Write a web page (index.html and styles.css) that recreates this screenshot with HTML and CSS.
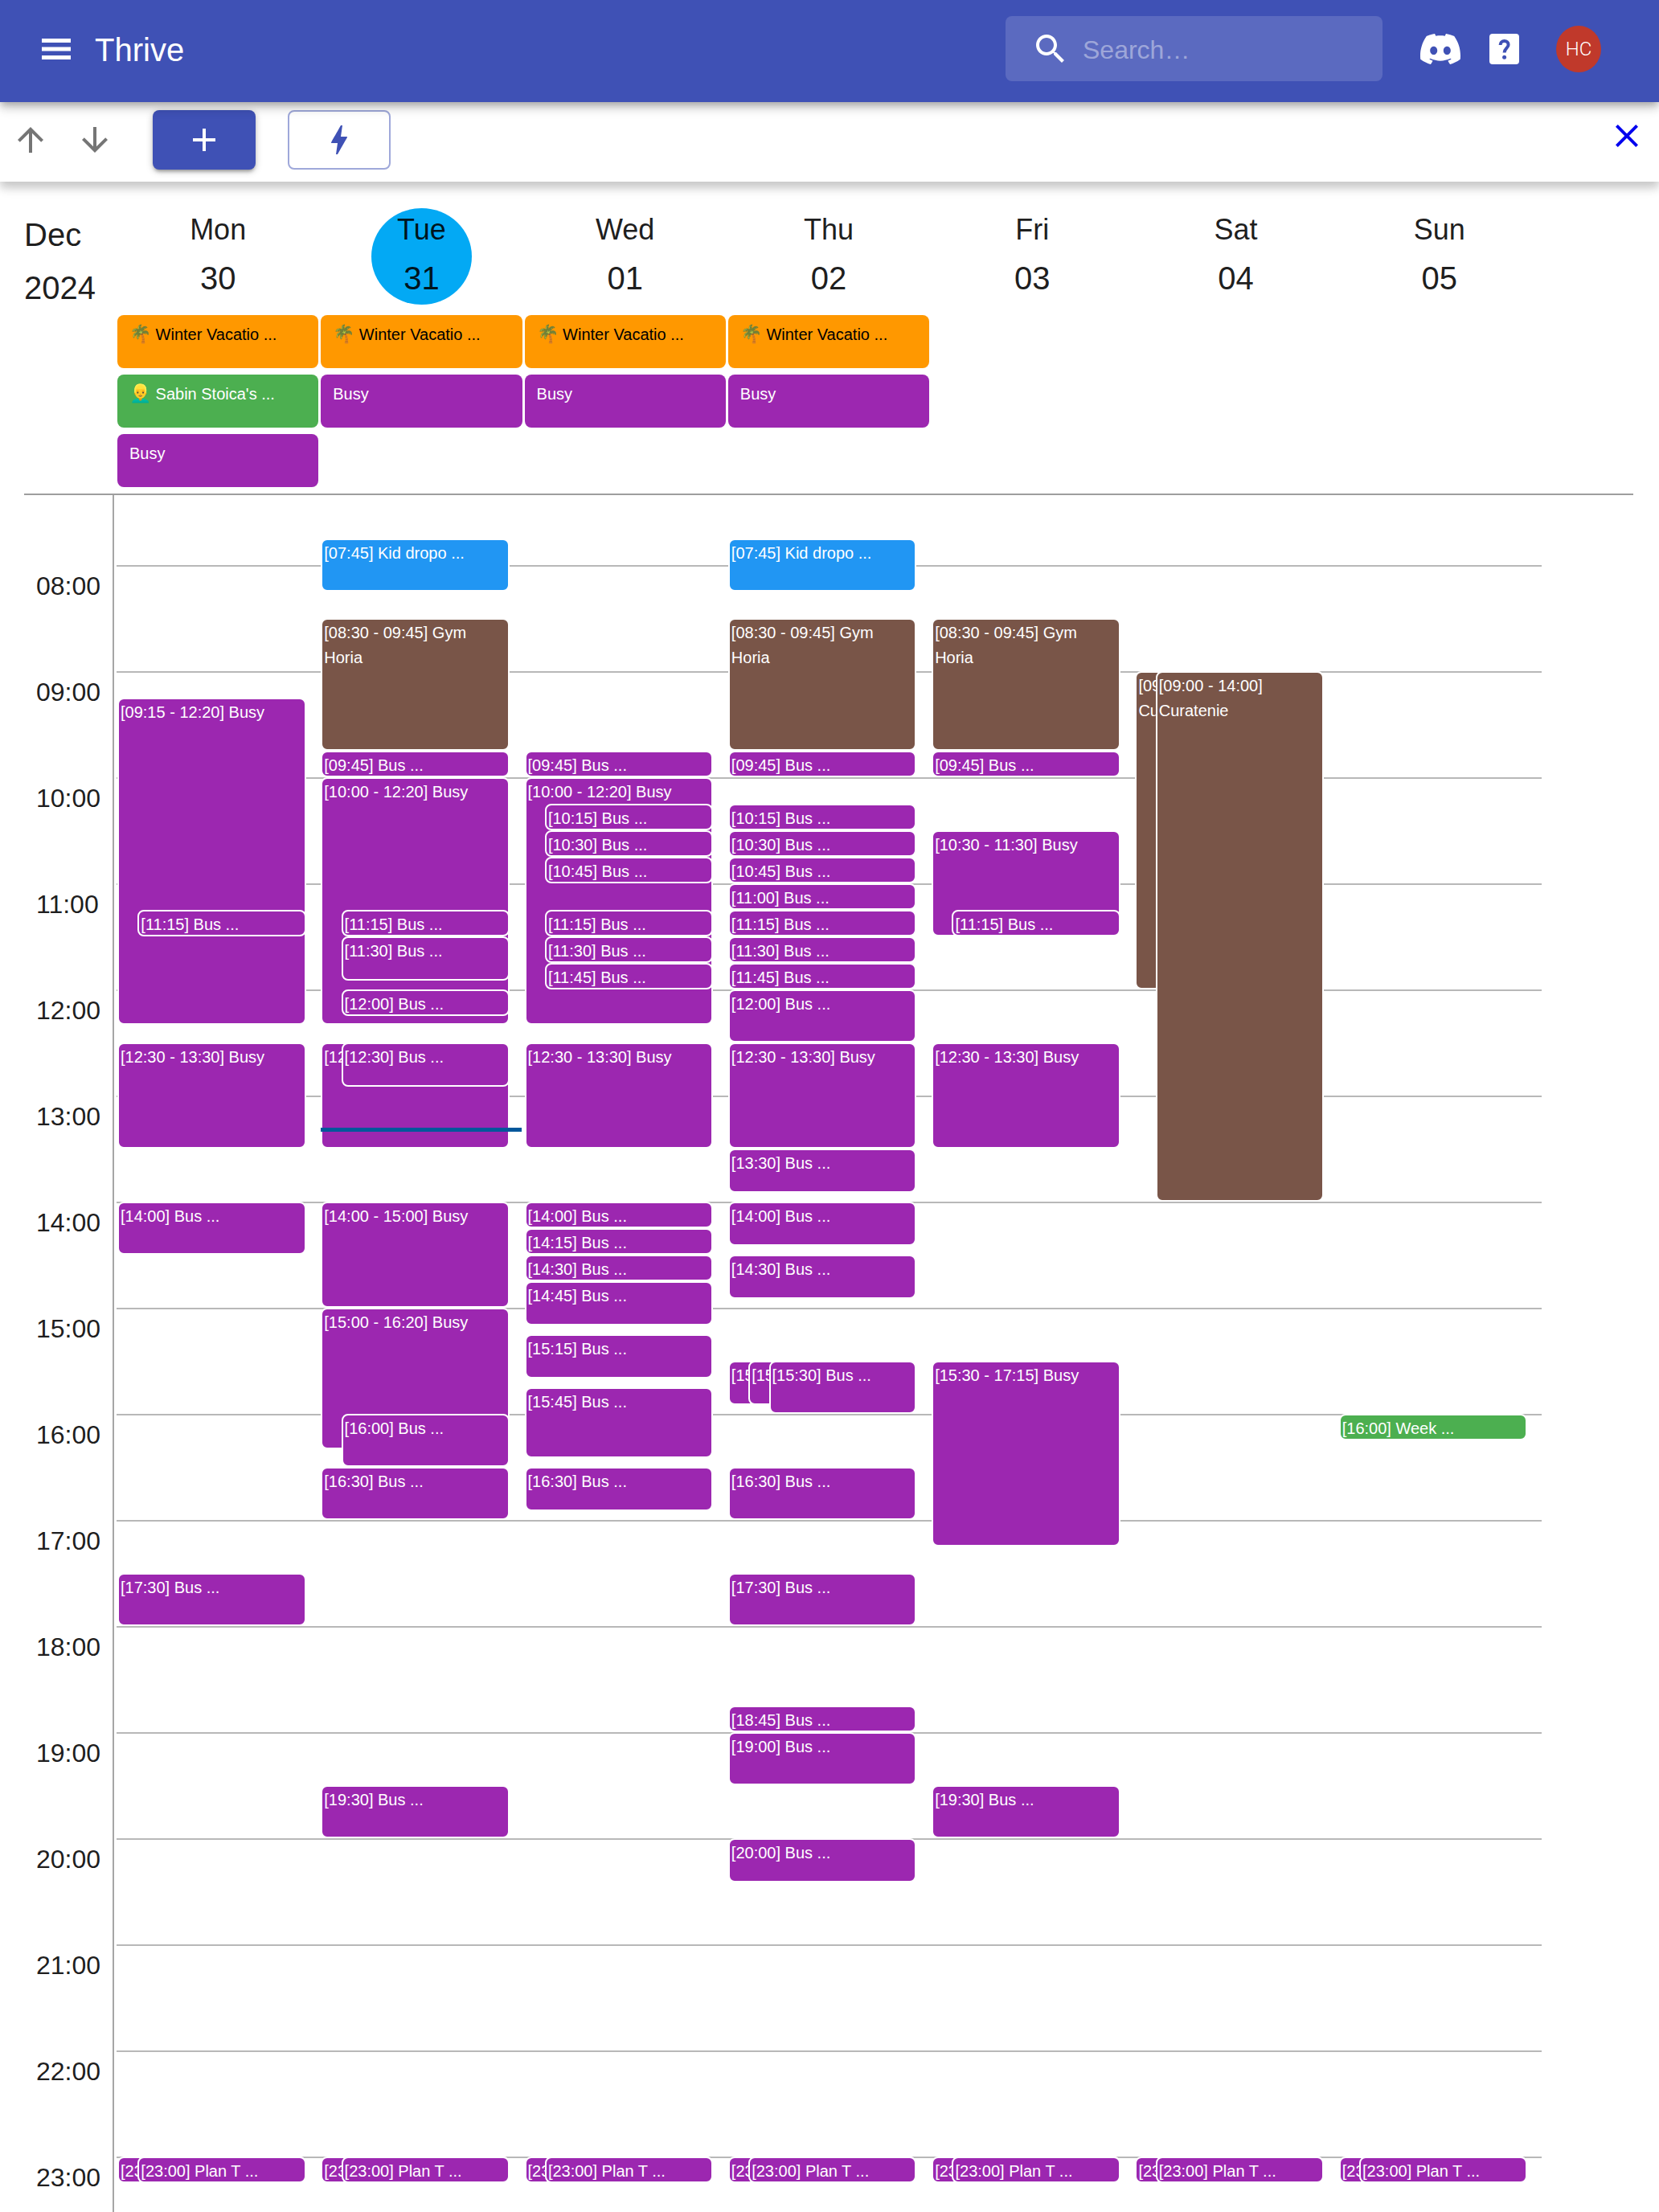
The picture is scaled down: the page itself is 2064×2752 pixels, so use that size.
FILE: index.html
```html
<!DOCTYPE html>
<html lang="en">
<head>
<meta charset="utf-8">
<meta name="viewport" content="width=device-width, initial-scale=1">
<title>Thrive</title>
<link rel="stylesheet" href="styles.css">
</head>
<body>
<div class="app">
  <header class="app-bar">
    <button class="icon-button" type="button" aria-label="Menu">
      <svg class="menu-icon" viewBox="0 0 36 26"><path d="M0 0h36v5H0zM0 10.5h36v5H0zM0 21h36v5H0z"/></svg>
    </button>
    <h1 class="brand">Thrive</h1>
    <label class="search">
      <svg class="icon" viewBox="0 0 24 24"><path d="M15.5 14h-.79l-.28-.27C15.41 12.59 16 11.11 16 9.5 16 5.91 13.09 3 9.5 3S3 5.91 3 9.5 5.91 16 9.5 16c1.61 0 3.09-.59 4.23-1.57l.27.28v.79l5 4.99L20.49 19l-4.99-5zm-6 0C7.01 14 5 11.99 5 9.5S7.01 5 9.5 5 14 7.01 14 9.5 11.99 14 9.5 14z"/></svg>
      <input class="search-input" type="search" placeholder="Search…" aria-label="Search">
    </label>
    <a class="discord" href="#discord" aria-label="Discord">
      <svg class="discord-icon" viewBox="0 0 24 24"><path d="M20.317 4.3698a19.7913 19.7913 0 00-4.8851-1.5152.0741.0741 0 00-.0785.0371c-.211.3753-.4447.8648-.6083 1.2495-1.8447-.2762-3.68-.2762-5.4868 0-.1636-.3933-.4058-.8742-.6177-1.2495a.077.077 0 00-.0785-.037 19.7363 19.7363 0 00-4.8852 1.515.0699.0699 0 00-.0321.0277C.5334 9.0458-.319 13.5799.0992 18.0578a.0824.0824 0 00.0312.0561c2.0528 1.5076 4.0413 2.4228 5.9929 3.0294a.0777.0777 0 00.0842-.0276c.4616-.6304.8731-1.2952 1.226-1.9942a.076.076 0 00-.0416-.1057c-.6528-.2476-1.2743-.5495-1.8722-.8923a.077.077 0 01-.0076-.1277c.1258-.0943.2517-.1923.3718-.2914a.0743.0743 0 01.0776-.0105c3.9278 1.7933 8.18 1.7933 12.0614 0a.0739.0739 0 01.0785.0095c.1202.099.246.1981.3728.2924a.077.077 0 01-.0066.1276 12.2986 12.2986 0 01-1.873.8914.0766.0766 0 00-.0407.1067c.3604.698.7719 1.3628 1.225 1.9932a.076.076 0 00.0842.0286c1.961-.6067 3.9495-1.5219 6.0023-3.0294a.077.077 0 00.0313-.0552c.5004-5.177-.8382-9.6739-3.5485-13.6604a.061.061 0 00-.0312-.0286zM8.02 15.3312c-1.1825 0-2.1569-1.0857-2.1569-2.419 0-1.3332.9555-2.4189 2.157-2.4189 1.2108 0 2.1757 1.0952 2.1568 2.419 0 1.3332-.9555 2.4189-2.1569 2.4189zm7.9748 0c-1.1825 0-2.1569-1.0857-2.1569-2.419 0-1.3332.9554-2.4189 2.1569-2.4189 1.2108 0 2.1757 1.0952 2.1568 2.419 0 1.3332-.946 2.4189-2.1568 2.4189Z"/></svg>
    </a>
    <a class="help" href="#help" aria-label="Help">
      <svg class="help-icon" viewBox="0 0 37 38"><rect width="37" height="38" rx="4"/><path class="help-hook" d="M13.6 14c0-3 2.2-5 5-5s5 2 5 4.700c0 4-5 4.500-5 9.800"/><circle class="help-dot" cx="18.600" cy="29.200" r="2.500"/></svg>
    </a>
    <button class="avatar" type="button">HC</button>
  </header>

  <nav class="toolbar">
    <button class="icon-button muted" type="button" aria-label="Previous week">
      <svg class="icon" viewBox="0 0 24 24"><path d="M4 12l1.410 1.410L11 7.830V20h2V7.830l5.580 5.590L20 12l-8-8-8 8z"/></svg>
    </button>
    <button class="icon-button muted" type="button" aria-label="Next week">
      <svg class="icon" viewBox="0 0 24 24"><path d="M20 12l-1.410-1.410L13 16.170V4h-2v12.170l-5.580-5.590L4 12l8 8 8-8z"/></svg>
    </button>
    <div class="actions">
      <button class="action primary" type="button" aria-label="Add event">
        <svg class="icon" viewBox="0 0 24 24"><path d="M19 13h-6v6h-2v-6H5v-2h6V5h2v6h6v2z"/></svg>
      </button>
      <button class="action outlined" type="button" aria-label="Shortcuts">
        <svg class="icon" viewBox="0 0 24 24"><path d="M11 21h-1l1-7H7.500c-.580 0-.570-.320-.380-.660.190-.340.050-.080.070-.120C8.480 10.940 10.420 7.540 13 3h1l-1 7h3.500c.490 0 .560.330.470.510l-.070.150C12.960 17.550 11 21 11 21z"/></svg>
      </button>
    </div>
    <a class="close" href="#close" aria-label="Close">
      <svg class="icon" viewBox="0 0 24 24"><path d="M19 6.410L17.590 5 12 10.590 6.410 5 5 6.410 10.590 12 5 17.590 6.410 19 12 13.410 17.590 19 19 17.590 13.410 12z"/></svg>
    </a>
  </nav>

  <main class="calendar">
    <section class="week-header">
      <div class="month"><span>Dec</span><span>2024</span></div>
      <div class="days">
        <div class="day"><h2 class="date"><span class="weekday">Mon</span><span class="number">30</span></h2>
          <a class="all-day vacation" href="#e"><span class="emoji">🌴</span> Winter Vacatio ...</a>
          <a class="all-day birthday" href="#e"><span class="emoji">👱‍♂️</span> Sabin Stoica's ...</a>
          <a class="all-day busy" href="#e">Busy</a></div>
        <div class="day"><h2 class="date today"><span class="weekday">Tue</span><span class="number">31</span></h2>
          <a class="all-day vacation" href="#e"><span class="emoji">🌴</span> Winter Vacatio ...</a>
          <a class="all-day busy" href="#e">Busy</a></div>
        <div class="day"><h2 class="date"><span class="weekday">Wed</span><span class="number">01</span></h2>
          <a class="all-day vacation" href="#e"><span class="emoji">🌴</span> Winter Vacatio ...</a>
          <a class="all-day busy" href="#e">Busy</a></div>
        <div class="day"><h2 class="date"><span class="weekday">Thu</span><span class="number">02</span></h2>
          <a class="all-day vacation" href="#e"><span class="emoji">🌴</span> Winter Vacatio ...</a>
          <a class="all-day busy" href="#e">Busy</a></div>
        <div class="day"><h2 class="date"><span class="weekday">Fri</span><span class="number">03</span></h2></div>
        <div class="day"><h2 class="date"><span class="weekday">Sat</span><span class="number">04</span></h2></div>
        <div class="day"><h2 class="date"><span class="weekday">Sun</span><span class="number">05</span></h2></div>
      </div>
    </section>

    <section class="scroller">
      <div class="hours">
        <div class="hour"></div>
        <div class="hour">08:00</div>
        <div class="hour">09:00</div>
        <div class="hour">10:00</div>
        <div class="hour">11:00</div>
        <div class="hour">12:00</div>
        <div class="hour">13:00</div>
        <div class="hour">14:00</div>
        <div class="hour">15:00</div>
        <div class="hour">16:00</div>
        <div class="hour">17:00</div>
        <div class="hour">18:00</div>
        <div class="hour">19:00</div>
        <div class="hour">20:00</div>
        <div class="hour">21:00</div>
        <div class="hour">22:00</div>
        <div class="hour">23:00</div>
      </div>
      <!-- --s: start, --n: length, both in five-minute slots counted from 07:00; --l: overlap level -->
      <div class="week">
        <div class="column">
          <a class="event busy" href="#e" style="--s:27;--n:37">[09:15 - 12:20] Busy</a>
          <a class="event busy" href="#e" style="--s:51;--n:3;--l:1">[11:15] Bus ...</a>
          <a class="event busy" href="#e" style="--s:66;--n:12">[12:30 - 13:30] Busy</a>
          <a class="event busy" href="#e" style="--s:84;--n:6">[14:00] Bus ...</a>
          <a class="event busy" href="#e" style="--s:126;--n:6">[17:30] Bus ...</a>
          <a class="event busy" href="#e" style="--s:192;--n:3">[23:00] Plan T ...</a>
          <a class="event busy" href="#e" style="--s:192;--n:3;--l:1">[23:00] Plan T ...</a>
        </div>
        <div class="column">
          <a class="event family" href="#e" style="--s:9;--n:6">[07:45] Kid dropo ...</a>
          <a class="event chore" href="#e" style="--s:18;--n:15">[08:30 - 09:45] Gym Horia</a>
          <a class="event busy" href="#e" style="--s:33;--n:3">[09:45] Bus ...</a>
          <a class="event busy" href="#e" style="--s:36;--n:28">[10:00 - 12:20] Busy</a>
          <a class="event busy" href="#e" style="--s:51;--n:3;--l:1">[11:15] Bus ...</a>
          <a class="event busy" href="#e" style="--s:54;--n:5;--l:1">[11:30] Bus ...</a>
          <a class="event busy" href="#e" style="--s:60;--n:3;--l:1">[12:00] Bus ...</a>
          <a class="event busy" href="#e" style="--s:66;--n:12">[12:30 - 13:30] Busy</a>
          <a class="event busy" href="#e" style="--s:66;--n:5;--l:1">[12:30] Bus ...</a>
          <a class="event busy" href="#e" style="--s:84;--n:12">[14:00 - 15:00] Busy</a>
          <a class="event busy" href="#e" style="--s:96;--n:16">[15:00 - 16:20] Busy</a>
          <a class="event busy" href="#e" style="--s:108;--n:6;--l:1">[16:00] Bus ...</a>
          <a class="event busy" href="#e" style="--s:114;--n:6">[16:30] Bus ...</a>
          <a class="event busy" href="#e" style="--s:150;--n:6">[19:30] Bus ...</a>
          <a class="event busy" href="#e" style="--s:192;--n:3">[23:00] Plan T ...</a>
          <a class="event busy" href="#e" style="--s:192;--n:3;--l:1">[23:00] Plan T ...</a>
          <div class="now" style="--m:378"></div>
        </div>
        <div class="column">
          <a class="event busy" href="#e" style="--s:33;--n:3">[09:45] Bus ...</a>
          <a class="event busy" href="#e" style="--s:36;--n:28">[10:00 - 12:20] Busy</a>
          <a class="event busy" href="#e" style="--s:39;--n:3;--l:1">[10:15] Bus ...</a>
          <a class="event busy" href="#e" style="--s:42;--n:3;--l:1">[10:30] Bus ...</a>
          <a class="event busy" href="#e" style="--s:45;--n:3;--l:1">[10:45] Bus ...</a>
          <a class="event busy" href="#e" style="--s:51;--n:3;--l:1">[11:15] Bus ...</a>
          <a class="event busy" href="#e" style="--s:54;--n:3;--l:1">[11:30] Bus ...</a>
          <a class="event busy" href="#e" style="--s:57;--n:3;--l:1">[11:45] Bus ...</a>
          <a class="event busy" href="#e" style="--s:66;--n:12">[12:30 - 13:30] Busy</a>
          <a class="event busy" href="#e" style="--s:84;--n:3">[14:00] Bus ...</a>
          <a class="event busy" href="#e" style="--s:87;--n:3">[14:15] Bus ...</a>
          <a class="event busy" href="#e" style="--s:90;--n:3">[14:30] Bus ...</a>
          <a class="event busy" href="#e" style="--s:93;--n:5">[14:45] Bus ...</a>
          <a class="event busy" href="#e" style="--s:99;--n:5">[15:15] Bus ...</a>
          <a class="event busy" href="#e" style="--s:105;--n:8">[15:45] Bus ...</a>
          <a class="event busy" href="#e" style="--s:114;--n:5">[16:30] Bus ...</a>
          <a class="event busy" href="#e" style="--s:192;--n:3">[23:00] Plan T ...</a>
          <a class="event busy" href="#e" style="--s:192;--n:3;--l:1">[23:00] Plan T ...</a>
        </div>
        <div class="column">
          <a class="event family" href="#e" style="--s:9;--n:6">[07:45] Kid dropo ...</a>
          <a class="event chore" href="#e" style="--s:18;--n:15">[08:30 - 09:45] Gym Horia</a>
          <a class="event busy" href="#e" style="--s:33;--n:3">[09:45] Bus ...</a>
          <a class="event busy" href="#e" style="--s:39;--n:3">[10:15] Bus ...</a>
          <a class="event busy" href="#e" style="--s:42;--n:3">[10:30] Bus ...</a>
          <a class="event busy" href="#e" style="--s:45;--n:3">[10:45] Bus ...</a>
          <a class="event busy" href="#e" style="--s:48;--n:3">[11:00] Bus ...</a>
          <a class="event busy" href="#e" style="--s:51;--n:3">[11:15] Bus ...</a>
          <a class="event busy" href="#e" style="--s:54;--n:3">[11:30] Bus ...</a>
          <a class="event busy" href="#e" style="--s:57;--n:3">[11:45] Bus ...</a>
          <a class="event busy" href="#e" style="--s:60;--n:6">[12:00] Bus ...</a>
          <a class="event busy" href="#e" style="--s:66;--n:12">[12:30 - 13:30] Busy</a>
          <a class="event busy" href="#e" style="--s:78;--n:5">[13:30] Bus ...</a>
          <a class="event busy" href="#e" style="--s:84;--n:5">[14:00] Bus ...</a>
          <a class="event busy" href="#e" style="--s:90;--n:5">[14:30] Bus ...</a>
          <a class="event busy" href="#e" style="--s:102;--n:5">[15:30] Bus ...</a>
          <a class="event busy" href="#e" style="--s:102;--n:5;--l:1">[15:30] Bus ...</a>
          <a class="event busy" href="#e" style="--s:102;--n:6;--l:2">[15:30] Bus ...</a>
          <a class="event busy" href="#e" style="--s:114;--n:6">[16:30] Bus ...</a>
          <a class="event busy" href="#e" style="--s:126;--n:6">[17:30] Bus ...</a>
          <a class="event busy" href="#e" style="--s:141;--n:3">[18:45] Bus ...</a>
          <a class="event busy" href="#e" style="--s:144;--n:6">[19:00] Bus ...</a>
          <a class="event busy" href="#e" style="--s:156;--n:5">[20:00] Bus ...</a>
          <a class="event busy" href="#e" style="--s:192;--n:3">[23:00] Plan T ...</a>
          <a class="event busy" href="#e" style="--s:192;--n:3;--l:1">[23:00] Plan T ...</a>
        </div>
        <div class="column">
          <a class="event chore" href="#e" style="--s:18;--n:15">[08:30 - 09:45] Gym Horia</a>
          <a class="event busy" href="#e" style="--s:33;--n:3">[09:45] Bus ...</a>
          <a class="event busy" href="#e" style="--s:42;--n:12">[10:30 - 11:30] Busy</a>
          <a class="event busy" href="#e" style="--s:51;--n:3;--l:1">[11:15] Bus ...</a>
          <a class="event busy" href="#e" style="--s:66;--n:12">[12:30 - 13:30] Busy</a>
          <a class="event busy" href="#e" style="--s:102;--n:21">[15:30 - 17:15] Busy</a>
          <a class="event busy" href="#e" style="--s:150;--n:6">[19:30] Bus ...</a>
          <a class="event busy" href="#e" style="--s:192;--n:3">[23:00] Plan T ...</a>
          <a class="event busy" href="#e" style="--s:192;--n:3;--l:1">[23:00] Plan T ...</a>
        </div>
        <div class="column">
          <a class="event chore" href="#e" style="--s:24;--n:36">[09:00 - 12:00]<br>Curatenie</a>
          <a class="event chore" href="#e" style="--s:24;--n:60;--l:1">[09:00 - 14:00]<br>Curatenie</a>
          <a class="event busy" href="#e" style="--s:192;--n:3">[23:00] Plan T ...</a>
          <a class="event busy" href="#e" style="--s:192;--n:3;--l:1">[23:00] Plan T ...</a>
        </div>
        <div class="column">
          <a class="event birthday" href="#e" style="--s:108;--n:3">[16:00] Week ...</a>
          <a class="event busy" href="#e" style="--s:192;--n:3">[23:00] Plan T ...</a>
          <a class="event busy" href="#e" style="--s:192;--n:3;--l:1">[23:00] Plan T ...</a>
        </div>
      </div>
    </section>
  </main>
</div>
</body>
</html>
```

FILE: styles.css
```css
* {
  box-sizing: border-box;
}

body {
  margin: 0;
  background: #fff;
  color: rgba(0, 0, 0, 0.9);
  font-family: "Liberation Sans", Arial, sans-serif;
}

button {
  border: 0;
  padding: 0;
  background: none;
  color: inherit;
  font: inherit;
  cursor: pointer;
}

a {
  color: inherit;
  text-decoration: none;
}

.app {
  display: flex;
  flex-direction: column;
  height: 100vh;
}

/* Top bar */

.app-bar {
  position: relative;
  z-index: 2;
  display: flex;
  align-items: center;
  padding: 20px 72px 26px 46px;
  background: #3f51b5;
  color: #fff;
  box-shadow: 0 4px 8px -2px rgba(0, 0, 0, 0.2), 0 8px 10px rgba(0, 0, 0, 0.14), 0 2px 20px rgba(0, 0, 0, 0.12);
}

.icon-button {
  display: flex;
  align-items: center;
  justify-content: center;
  width: 48px;
  height: 48px;
}

.icon {
  display: block;
  width: 48px;
  height: 48px;
  fill: currentColor;
}

.menu-icon {
  width: 36px;
  height: 26px;
  fill: currentColor;
}

.brand {
  margin: 0 auto 0 24px;
  padding-top: 3px;
  font-size: 40px;
  font-weight: 400;
}

.search {
  display: flex;
  align-items: center;
  gap: 16px;
  width: 469px;
  height: 81px;
  padding: 0 32px;
  border-radius: 8px;
  background: rgba(255, 255, 255, 0.15);
}

.search-input {
  flex: 1;
  min-width: 0;
  padding: 4px 0 0;
  border: 0;
  outline: 0;
  background: none;
  color: #fff;
  font: 32px "Liberation Sans", Arial, sans-serif;
}

.search-input::placeholder {
  color: rgba(255, 255, 255, 0.42);
}

.discord {
  margin-left: 47px;
}

.discord-icon {
  display: block;
  width: 50px;
  height: 50px;
  fill: #fff;
}

.help {
  margin-left: 36px;
}

.help-icon {
  display: block;
  width: 37px;
  height: 38px;
  fill: #fff;
}

.help-hook {
  fill: none;
  stroke: #3f51b5;
  stroke-width: 4;
}

.help-dot {
  fill: #3f51b5;
}

.avatar {
  width: 56px;
  height: 58px;
  margin-left: 46px;
  border-radius: 50%;
  background: #c0392b;
  color: #fff;
  font-family: Roboto, sans-serif;
  font-size: 24px;
  font-weight: 300;
}

/* Toolbar */

.toolbar {
  position: relative;
  z-index: 1;
  display: flex;
  align-items: center;
  gap: 32px;
  padding: 10px 8px 15px 14px;
  background: #fff;
  box-shadow: 0 8px 10px rgba(0, 0, 0, 0.16), 0 4px 18px rgba(0, 0, 0, 0.1);
}

.muted {
  color: #757575;
}

.actions {
  display: flex;
  gap: 40px;
  padding-left: 16px;
}

.action {
  display: flex;
  align-items: center;
  justify-content: center;
  width: 128px;
  height: 74px;
  border-radius: 8px;
}

.primary {
  background: #3f51b5;
  color: #fff;
  box-shadow: 0 4px 4px -2px rgba(0, 0, 0, 0.3), 0 2px 8px rgba(0, 0, 0, 0.25);
}

.outlined {
  border: 2px solid rgba(63, 81, 181, 0.5);
  color: #3f51b5;
}

.close {
  align-self: flex-start;
  margin-left: auto;
  padding: 8px;
  color: #00e;
}

/* Week header */

.calendar {
  display: flex;
  flex: 1;
  flex-direction: column;
  min-height: 0;
  padding: 33px 32px 0 30px;
}

.week-header,
.scroller {
  display: grid;
  grid-template-columns: 112px 1fr;
  column-gap: 3px;
  padding-right: 114px;
}

.week-header {
  padding-bottom: 8px;
  border-bottom: 2px solid #9e9e9e;
}

.month {
  display: flex;
  flex-direction: column;
  font-size: 40px;
  line-height: 66px;
}

.days,
.week {
  display: grid;
  grid-template-columns: repeat(7, 1fr);
}

.day {
  display: flex;
  flex-direction: column;
  gap: 8px;
  padding: 0 2px 0 1px;
}

.date {
  display: flex;
  flex-direction: column;
  align-items: center;
  align-self: center;
  width: 125px;
  margin: 0 0 5px;
  border-radius: 50%;
  font-weight: 400;
}

.today {
  background: #03a9f4;
}

.weekday {
  font-size: 36px;
  line-height: 54px;
}

.number {
  font-size: 40px;
  line-height: 66px;
}

.all-day {
  height: 66px;
  padding: 9px 15px;
  border-radius: 8px;
  font-size: 20px;
  line-height: 31px;
  white-space: nowrap;
  overflow: hidden;
}

.emoji {
  font-size: 22px;
  line-height: 20px;
}

.vacation {
  background: #ff9800;
  color: #000;
}

.birthday {
  background: #4caf50;
  color: #fff;
}

.busy {
  background: #9c27b0;
  color: #fff;
}

.family {
  background: #2196f3;
  color: #fff;
}

.chore {
  background: #795548;
  color: #fff;
}

/* Hour grid: one hour is 132px, so a five-minute slot is 11px */

.scroller {
  flex: 1;
  min-height: 0;
  margin-right: -32px;
  padding-right: 146px;
  overflow-y: auto;
  scrollbar-width: none;
}

.hours {
  margin-top: -45px;
  border-right: 2px solid #a6a6a6;
}

.hour {
  height: 132px;
  padding-left: 15px;
  font-size: 32px;
  line-height: 52px;
}

.week {
  margin-top: -45px;
  background: repeating-linear-gradient(#b8b8b8 0 2px, transparent 2px 132px);
}

.column {
  position: relative;
}

.event {
  position: absolute;
  top: calc(var(--s) * 11px);
  right: 7%;
  left: calc(1px + var(--l, 0) * 10%);
  height: calc(var(--n) * 11px);
  padding: 1px 2px;
  border: 2px solid #fff;
  border-radius: 8px;
  font-size: 20px;
  line-height: 31px;
  overflow: hidden;
}

.now {
  position: absolute;
  top: calc(var(--m) * 2.2px);
  right: 3px;
  left: 1px;
  height: 5px;
  background: #01579b;
}
```
